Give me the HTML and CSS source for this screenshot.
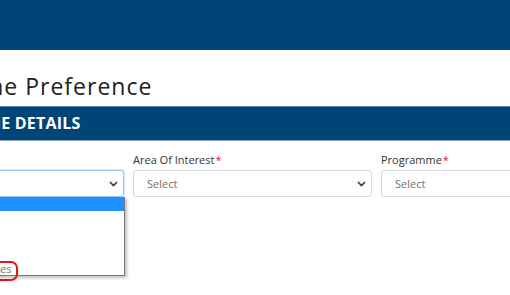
FILE: index.html
```html
<!DOCTYPE html>
<html lang="en">
<head>
<meta charset="utf-8">
<title>Programme Preference</title>
<link rel="stylesheet" href="styles.css">
</head>
<body>
<header class="topbar"></header>
<main class="page">
  <h1 class="title">Programme Preference</h1>
  <div class="section-bar"><h2 class="section-title">PROGRAMME DETAILS</h2></div>
  <div class="fields">
    <div class="field">
      <label class="label">Level<span class="req">*</span></label>
      <div class="select focused">
        <span class="select-text">Select</span>
        <svg class="chev" width="9" height="6" viewBox="0 0 9 6"><path d="M1 1l3.5 3.5L8 1" fill="none" stroke="#333" stroke-width="1.6"/></svg>
      </div>
      <ul class="dropdown">
        <li class="opt active">Select</li>
        <li class="opt">Diploma</li>
        <li class="opt">Degree</li>
        <li class="opt">Master</li>
        <li class="opt">Doctorate</li>
        <li class="opt">Professional Certificates</li>
      </ul>
      <div class="annot"></div>
    </div>
    <div class="field">
      <label class="label">Area Of Interest<span class="req">*</span></label>
      <div class="select">
        <span class="select-text">Select</span>
        <svg class="chev" width="9" height="6" viewBox="0 0 9 6"><path d="M1 1l3.5 3.5L8 1" fill="none" stroke="#333" stroke-width="1.6"/></svg>
      </div>
    </div>
    <div class="field">
      <label class="label">Programme<span class="req">*</span></label>
      <div class="select">
        <span class="select-text">Select</span>
        <svg class="chev" width="9" height="6" viewBox="0 0 9 6"><path d="M1 1l3.5 3.5L8 1" fill="none" stroke="#333" stroke-width="1.6"/></svg>
      </div>
    </div>
  </div>
</main>
</body>
</html>
```

FILE: styles.css
```css
* { box-sizing: border-box; }
html, body { margin: 0; padding: 0; }
body {
  width: 510px;
  height: 295px;
  overflow: hidden;
  background: #fff;
  font-family: "Open Sans", "DejaVu Sans", sans-serif;
  color: #333;
}
.topbar {
  height: 50px;
  background: #004578;
}
.page {
  margin-left: -115px;
  width: 760px;
}
.title {
  margin: 0 0 0 -3px;
  padding: 23px 0 7px 0;
  line-height: 26px;
  font-size: 23px;
  font-weight: 400;
  letter-spacing: 1px;
  color: #222;
}
.section-bar {
  margin-left: -200px;
  padding-left: 218px;
  width: 1000px;
  height: 35px;
  background: #004578;
  border-top: 1px solid #5f86a8;
  border-bottom: 1px solid #8ea9c2;
}
.section-title {
  margin: 0;
  line-height: 33px;
  font-size: 16px;
  font-weight: 700;
  letter-spacing: 0.2px;
  color: #fff;
}
.fields {
  display: grid;
  grid-template-columns: 239px 239px 239px;
  column-gap: 9px;
  padding-top: 11px;
}
.field {
  position: relative;
  display: flex;
  flex-direction: column;
}
.label {
  font-size: 11px;
  line-height: 15px;
  color: #333;
  margin-bottom: 3px;
}
.req { color: #e0161e; margin-left: 1px; }
.select {
  height: 27px;
  border: 1px solid #d6dbe0;
  border-radius: 3px;
  display: flex;
  align-items: center;
  justify-content: space-between;
  padding: 0 5px 0 13px;
  background: #fff;
}
.select.focused {
  border-color: #9cc7f0;
  box-shadow: 0 0 0 1px #d6e8fa;
}
.select-text {
  font-size: 11px;
  color: #6f6f6f;
}
.focused .select-text { visibility: hidden; }
.chev { display: block; }
.dropdown {
  position: absolute;
  top: 45px;
  left: 0;
  width: 240px;
  margin: 0;
  padding: 0;
  list-style: none;
  background: #fff;
  border: 1px solid #7a7a7a;
  box-shadow: 2px 2px 3px rgba(0,0,0,0.25);
}
.opt {
  height: 12.8px;
  line-height: 13px;
  font-size: 11px;
  color: #777;
  padding-left: 2px;
  white-space: nowrap;
}
.opt.active {
  background: #1e90ff;
  color: #fff;
}
.annot {
  position: absolute;
  top: 109px;
  left: 70px;
  width: 63px;
  height: 20px;
  border: 2px solid #e4141b;
  border-radius: 7px;
}
```
